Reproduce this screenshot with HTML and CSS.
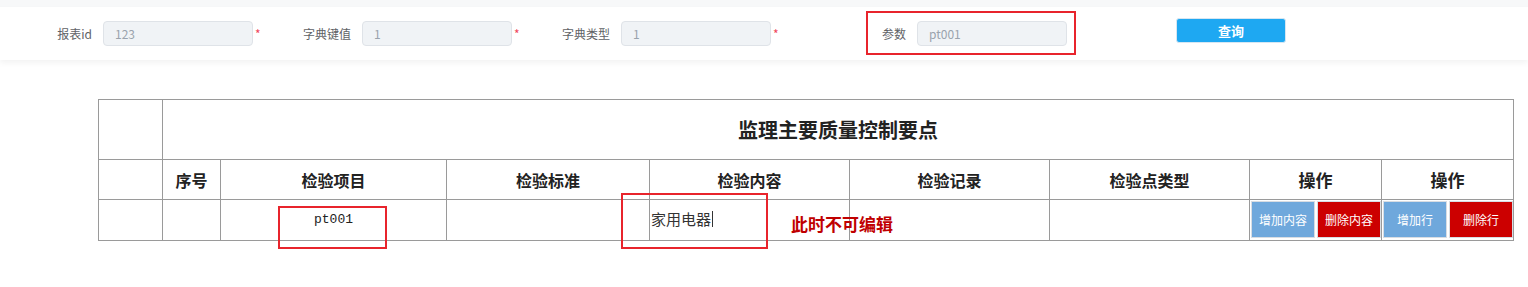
FILE: index.html
```html
<!DOCTYPE html>
<html lang="zh-CN">
<head>
<meta charset="utf-8">
<title>监理主要质量控制要点</title>
<link rel="stylesheet" href="styles.css">
</head>
<body>
<div class="page">
  <div class="panel">
    <div class="form">
      <div class="form-item">
        <label class="label">报表id</label>
        <div class="input">123</div>
        <span class="star">*</span>
      </div>
      <div class="form-item">
        <label class="label">字典键值</label>
        <div class="input">1</div>
        <span class="star">*</span>
      </div>
      <div class="form-item wide">
        <label class="label">字典类型</label>
        <div class="input">1</div>
        <span class="star">*</span>
      </div>
      <div class="form-item param">
        <label class="label">参数</label>
        <div class="input">pt001</div>
        <span class="mark mark-param"></span>
      </div>
      <button class="query">查询</button>
    </div>
  </div>

  <table class="grid">
    <colgroup>
      <col class="c64"><col class="c58"><col class="c226"><col class="c203">
      <col class="c200"><col class="c200"><col class="c200"><col class="c132"><col class="c132">
    </colgroup>
    <tr class="row-title">
      <td></td>
      <td colspan="8" class="title">监理主要质量控制要点</td>
    </tr>
    <tr class="row-head">
      <td></td>
      <th>序号</th>
      <th>检验项目</th>
      <th>检验标准</th>
      <th>检验内容</th>
      <th>检验记录</th>
      <th>检验点类型</th>
      <th class="op">操作</th>
      <th class="op">操作</th>
    </tr>
    <tr class="row-data">
      <td></td>
      <td></td>
      <td class="mono">pt001</td>
      <td></td>
      <td class="content">家用电器<span class="caret"></span></td>
      <td></td>
      <td></td>
      <td class="ops"><div class="btns"><button class="btn blue">增加内容</button><button class="btn red">删除内容</button></div></td>
      <td class="ops"><div class="btns"><button class="btn blue">增加行</button><button class="btn red">删除行</button></div></td>
    </tr>
  </table>

  <span class="mark mark-item"></span>
  <span class="mark mark-content"></span>
  <span class="note">此时不可编辑</span>
</div>
</body>
</html>
```

FILE: styles.css
```css
html, body {
  margin: 0;
  padding: 0;
}
body {
  background: linear-gradient(#f7f8f9 0, #f7f8f9 7px, #ffffff 7px);
  font-family: "Noto Sans CJK SC", "Liberation Sans", sans-serif;
  width: 1528px;
  height: 287px;
  overflow: hidden;
}
.page {
  position: relative;
  padding-top: 7px;
}
.panel {
  background: #fff;
  height: 53px;
  box-shadow: 0 3px 6px rgba(0, 0, 0, 0.05);
}
.form {
  display: flex;
  align-items: center;
  height: 53px;
  padding-left: 23px;
}
.form-item {
  display: flex;
  align-items: center;
  width: 259px;
  flex: none;
}
.form-item.wide { width: 296px; }
.form-item.param { width: 229px; position: relative; }
.label {
  width: 80px;
  box-sizing: border-box;
  padding-right: 11px;
  text-align: right;
  font-size: 12px;
  color: #606266;
  flex: none;
}
.input {
  width: 150px;
  height: 25px;
  box-sizing: border-box;
  border: 1px solid #dfe3e8;
  border-radius: 4px;
  background: #f0f3f6;
  color: #9aa3ad;
  font-size: 12px;
  line-height: 23px;
  padding-left: 11px;
  flex: none;
}
.star {
  color: #f0455a;
  font-size: 12px;
  margin-left: 2px;
  line-height: 12px;
}
.query {
  margin-left: 110px;
  align-self: flex-start;
  margin-top: 11px;
  width: 110px;
  height: 25px;
  border: 1px solid #d6e6f2;
  border-radius: 3px;
  background: #1ea8f2;
  color: #fff;
  font-family: "Noto Sans CJK SC", sans-serif;
  font-size: 13px;
  font-weight: bold;
  padding: 0;
}
.grid {
  margin-top: 39px;
  margin-left: 98px;
  width: 1416px;
  border-collapse: collapse;
  table-layout: fixed;
}
.c64 { width: 64px; }
.c58 { width: 58px; }
.c226 { width: 226px; }
.c203 { width: 203px; }
.c200 { width: 200px; }
.c132 { width: 132px; }
.grid td, .grid th {
  border: 1px solid #9a9a9a;
  padding: 0;
  text-align: center;
  color: #222;
  line-height: 18px;
}
.row-title td { height: 59px; }
.row-head th, .row-head td { height: 39px; }
.row-data td { height: 38px; }
.title {
  font-size: 20px;
  font-weight: bold;
  color: #333;
}
.grid th {
  font-size: 16px;
  font-weight: bold;
}
.grid th.op { font-size: 17px; }
.grid td.mono {
  font-family: "Liberation Mono", monospace;
  font-size: 13px;
  color: #222;
  padding-bottom: 1px;
}
.grid td.content {
  text-align: left;
  padding-left: 1px;
  font-size: 15px;
  color: #333;
  padding-bottom: 2px;
}
.caret {
  display: inline-block;
  width: 0;
  height: 16px;
  border-left: 1px solid #333;
  vertical-align: -2px;
  margin-left: 1px;
}
.grid td.ops { padding: 1px 0 0 1px; vertical-align: top; }
.btns {
  display: flex;
  gap: 2px;
  height: 37px;
}
.btn {
  width: 64px;
  height: 37px;
  box-sizing: border-box;
  border: 1px solid #d8dde3;
  padding: 0;
  margin: 0;
  color: #fff;
  font-family: "Noto Sans CJK SC", sans-serif;
  font-size: 12px;
  line-height: 16px;
}
.btn.blue { background: #6fa8dc; }
.btn.red { background: #cc0000; }
.mark {
  position: absolute;
  border: 2px solid #e8242c;
  box-sizing: border-box;
}
.mark-param {
  left: 29px;
  top: -10px;
  width: 210px;
  height: 44px;
}
.mark-item {
  left: 278px;
  top: 206px;
  width: 109px;
  height: 43px;
}
.mark-content {
  left: 621px;
  top: 193px;
  width: 147px;
  height: 56px;
}
.note {
  position: absolute;
  left: 791px;
  top: 212px;
  color: #c00000;
  font-size: 17px;
  font-weight: bold;
  line-height: 24px;
}
```
